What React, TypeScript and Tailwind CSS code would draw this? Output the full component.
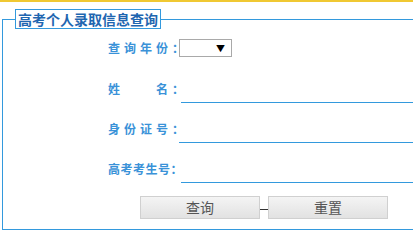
import React from "react";

const cjk = { fontFamily: '"Noto Sans CJK SC", "Noto Sans", sans-serif' };

export default function App() {
  return (
    <div className="w-[413px] h-[231px] overflow-hidden bg-white relative" style={cjk}>
      <div className="h-[2px] bg-[#f0c832]" />
      <fieldset className="mt-[7px] ml-[2px] w-[640px] h-[221px] border border-[#3399dd] pl-3">
        <legend className="border border-[#3399dd] px-[2px] h-[20px] text-[14px] leading-[18px] font-bold text-[#1f66b0]">
          高考个人录取信息查询
        </legend>
        <div className="flex flex-col pl-[93px] text-[12px] font-bold text-[#3a92d8]">
          <div className="flex items-center mt-[10px] h-[18px]">
            <span className="w-[71px] tracking-[4px] whitespace-nowrap">查询年份：</span>
            <div className="w-[53px] h-[18px] border border-[#a9a9a9] flex items-center justify-end pr-[6px]">
              <span className="text-[9px] text-black leading-none">▼</span>
            </div>
          </div>
          <div className="flex items-center mt-[18px] h-[28px]">
            <span className="w-[71px] tracking-[4px] whitespace-nowrap">姓　　名：</span>
            <div className="ml-[2px] flex-1 h-[28px] border-b border-[#3399dd]" />
          </div>
          <div className="flex items-center mt-[12px] h-[28px]">
            <span className="w-[71px] tracking-[4px] whitespace-nowrap">身份证号：</span>
            <div className="flex-1 h-[28px] border-b border-[#3399dd]" />
          </div>
          <div className="flex items-center mt-[12px] h-[28px]">
            <span className="w-[71px] tracking-[0.5px] whitespace-nowrap">高考考生号：</span>
            <div className="ml-[2px] flex-1 h-[28px] border-b border-[#3399dd]" />
          </div>
          <div className="flex mt-[13px] ml-[32px] font-normal">
            <button className="w-[120px] h-[23px] border border-[#d0d0d0] bg-gradient-to-b from-[#f4f4f4] to-[#e2e2e2] text-[14px] leading-[21px] text-[#555]">
              查询
            </button>
            <div className="w-[8px] h-px bg-[#333] mt-[13px]" />
            <button className="w-[120px] h-[23px] border border-[#d0d0d0] bg-gradient-to-b from-[#f4f4f4] to-[#e2e2e2] text-[14px] leading-[21px] text-[#555]">
              重置
            </button>
          </div>
        </div>
      </fieldset>
    </div>
  );
}
